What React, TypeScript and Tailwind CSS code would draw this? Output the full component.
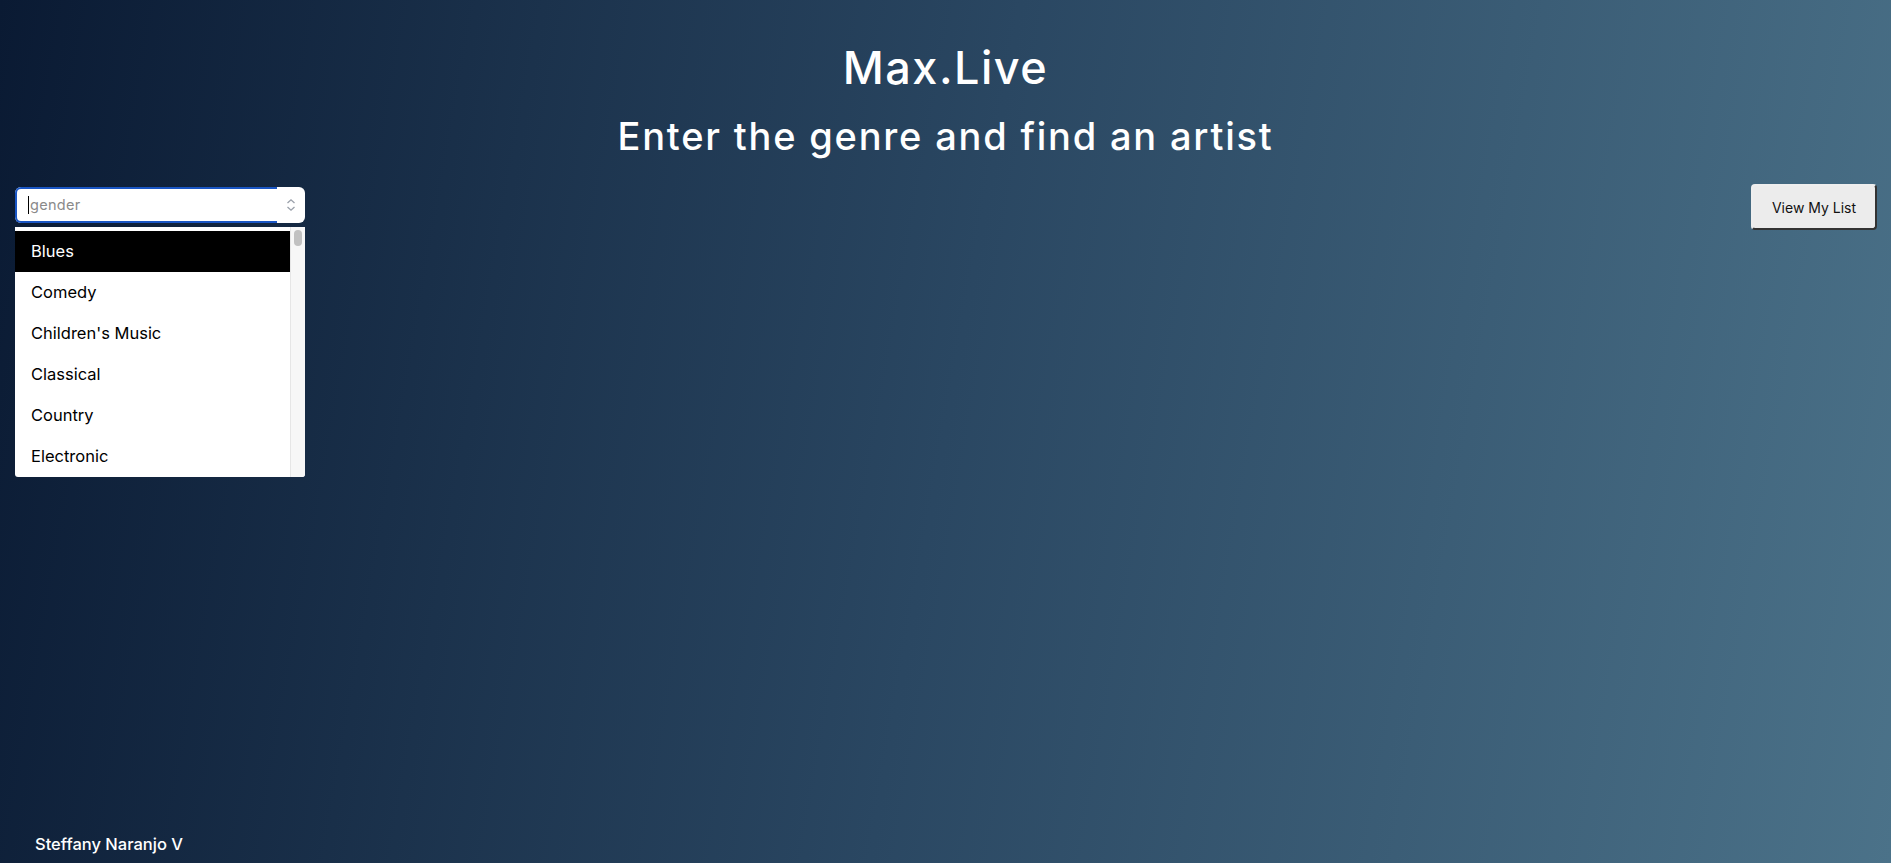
import React from "react";

const genres = ["Blues", "Comedy", "Children's Music", "Classical", "Country", "Electronic"];

export default function App() {
  return (
    <div className="h-screen w-full overflow-hidden flex flex-col text-white font-['Inter',sans-serif] bg-[linear-gradient(100deg,#0a1a33_0%,#2a4762_50%,#4b7289_100%)]">
      <header className="flex flex-col items-center pt-[46px]">
        <h1 className="text-[45px] leading-[44px] font-medium tracking-[1.5px]">Max.Live</h1>
        <h2 className="mt-[28px] text-[38px] leading-[37px] font-medium tracking-[1.8px]">
          Enter the genre and find an artist
        </h2>
      </header>

      <div className="mt-[29px] flex items-start justify-between pl-[15px] pr-[14px]">
        <div className="relative mt-[3px] w-[290px]">
          <div className="flex h-[36px] w-full rounded-[6px] bg-white">
            <div className="flex flex-1 items-center rounded-l-[6px] border-y-2 border-l-2 border-[#1a56c4] pl-[11px]">
              <span className="h-[18px] w-px bg-black" />
              <span className="ml-[1px] text-[14.5px] tracking-[0.3px] text-[#8a8a8a]">gender</span>
            </div>
            <div className="flex w-[28px] items-center justify-center">
              <svg width="10" height="14" viewBox="0 0 10 14" fill="none" stroke="#9aa0aa" strokeWidth="1.3">
                <path d="M1.5 5 L5 1.8 L8.5 5" />
                <path d="M1.5 9 L5 12.2 L8.5 9" />
              </svg>
            </div>
          </div>
          <div className="absolute left-0 top-[40px] flex h-[250px] w-[290px] overflow-hidden rounded-b-[3px] bg-white text-black">
            <ul className="flex-1 pt-[4px]">
              {genres.map((g, i) => (
                <li
                  key={g}
                  className={
                    i === 0
                      ? "flex h-[41px] items-center bg-black pl-[16px] text-[16.5px] text-white"
                      : "flex h-[41px] items-center pl-[16px] text-[16.5px] text-black"
                  }
                >
                  {g}
                </li>
              ))}
            </ul>
            <div className="relative w-[15px] border-l border-[#e6e6e6] bg-[#f7f7f7]">
              <div className="absolute left-[3px] top-[3px] h-[16px] w-[8px] rounded-[4px] bg-[#c1c1c1]" />
            </div>
          </div>
        </div>

        <button className="h-[46px] w-[126px] rounded-[4px] border-2 border-[#eeeeee] border-r-[#333] border-b-[#333] bg-[#ececec] text-[14px] text-[#111]">
          View My List
        </button>
      </div>

      <footer className="mt-auto pb-[11px] pl-[35px]">
        <p className="text-[16.5px] font-medium leading-[16px]">Steffany Naranjo V</p>
      </footer>
    </div>
  );
}
